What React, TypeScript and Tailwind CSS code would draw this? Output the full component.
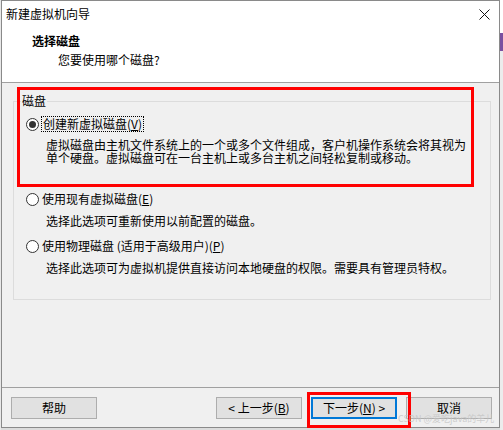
import React from "react";

function Radio({ checked }: { checked?: boolean }) {
  return (
    <div className="w-[13px] h-[13px] rounded-full border border-[#333333] bg-white flex items-center justify-center shrink-0">
      {checked && <div className="w-[7px] h-[7px] rounded-full bg-[#333333]" />}
    </div>
  );
}

function Btn({ children, def }: { children: React.ReactNode; def?: boolean }) {
  return (
    <div
      className={
        "w-[86px] h-[22px] flex items-center justify-center bg-[#e1e1e1] " +
        (def ? "border-2 border-[#0078d7]" : "border border-[#adadad]")
      }
    >
      {children}
    </div>
  );
}

export default function App() {
  return (
    <div className="w-[503px] h-[430px] bg-[#dcdcdc] flex relative overflow-hidden font-['Microsoft_YaHei','Noto_Sans_CJK_SC',sans-serif] text-[12px] text-black leading-[16px]">
      <div className="w-[1px] h-full bg-[#e8e8e8]" />
      <div className="w-[499px] h-[428px] border border-[#8a8a8a] bg-[#f0f0f0] flex flex-col">
        {/* title bar */}
        <div className="h-[26px] bg-white flex items-center justify-between pl-[4px] pr-[9px]">
          <span>新建虚拟机向导</span>
          <svg width="11" height="11" viewBox="0 0 11 11">
            <path d="M0.5 0.5 L10.5 10.5 M10.5 0.5 L0.5 10.5" stroke="#111" strokeWidth="1" />
          </svg>
        </div>
        {/* header */}
        <div className="h-[56px] bg-white border-b border-[#a0a0a0] flex flex-col pt-[6px]">
          <div className="pl-[30px] font-bold">选择磁盘</div>
          <div className="pl-[56px] mt-[3px]">您要使用哪个磁盘?</div>
        </div>
        {/* body */}
        <div className="flex-1 flex flex-col">
          <div className="mt-[18px] ml-[11px] mr-[8px] h-[199px] border border-[#dcdcdc] relative pl-[12px] pt-[14px]">
            <div className="absolute -top-[9px] left-[7px] bg-[#f0f0f0] px-[1px]">磁盘</div>
            <div className="flex items-center h-[16px]">
              <Radio checked />
              <span className="ml-[2px] border border-dotted border-black leading-[14px] px-[1px]">
                创建新虚拟磁盘(<span className="underline">V</span>)
              </span>
            </div>
            <div className="pl-[20px] mt-[6px] whitespace-nowrap">
              <div className="h-[13px] leading-[13px]">
                虚拟磁盘由主机文件系统上的一个或多个文件组成，客户机操作系统会将其视为
              </div>
              <div className="h-[13px] leading-[13px]">
                单个硬盘。虚拟磁盘可在一台主机上或多台主机之间轻松复制或移动。
              </div>
            </div>
            <div className="flex items-center h-[16px] mt-[27px]">
              <Radio />
              <span className="ml-[3px]">
                使用现有虚拟磁盘(<span className="underline">E</span>)
              </span>
            </div>
            <div className="pl-[20px] mt-[7px] leading-[13px] whitespace-nowrap">
              选择此选项可重新使用以前配置的磁盘。
            </div>
            <div className="flex items-center h-[16px] mt-[11px]">
              <Radio />
              <span className="ml-[3px]">
                使用物理磁盘 (适用于高级用户)(<span className="underline">P</span>)
              </span>
            </div>
            <div className="pl-[20px] mt-[7px] leading-[13px] whitespace-nowrap">
              选择此选项可为虚拟机提供直接访问本地硬盘的权限。需要具有管理员特权。
            </div>
          </div>
          <div className="flex-1" />
          <div className="h-[1px] bg-[#a0a0a0]" />
          <div className="flex items-center pt-[9px] pb-[8px] pl-[9px] pr-[7px]">
            <Btn>帮助</Btn>
            <div className="flex-1" />
            <div className="flex gap-[9px]">
              <Btn>
                &lt; 上一步(<span className="underline">B</span>)
              </Btn>
              <Btn def>
                下一步(<span className="underline">N</span>) &gt;
              </Btn>
              <Btn>取消</Btn>
            </div>
          </div>
        </div>
      </div>
      <div className="w-[3px] h-full bg-[#ececec] flex flex-col">
        <div className="h-[33px] bg-white" />
        <div className="h-[18px] bg-[#7a4fa0]" />
      </div>
      {/* annotations */}
      <div className="absolute left-[17px] top-[87px] w-[457px] h-[100px] border-[3px] border-[#ff0000]" />
      <div className="absolute left-[307px] top-[392px] w-[104px] h-[36px] border-[3px] border-[#ff0000]" />
      <div className="absolute left-[398px] top-[413px] text-[9px] leading-[11px] text-[#c4c4c4]/80 whitespace-nowrap">
        CSDN @爱吃java的羊儿
      </div>
    </div>
  );
}
